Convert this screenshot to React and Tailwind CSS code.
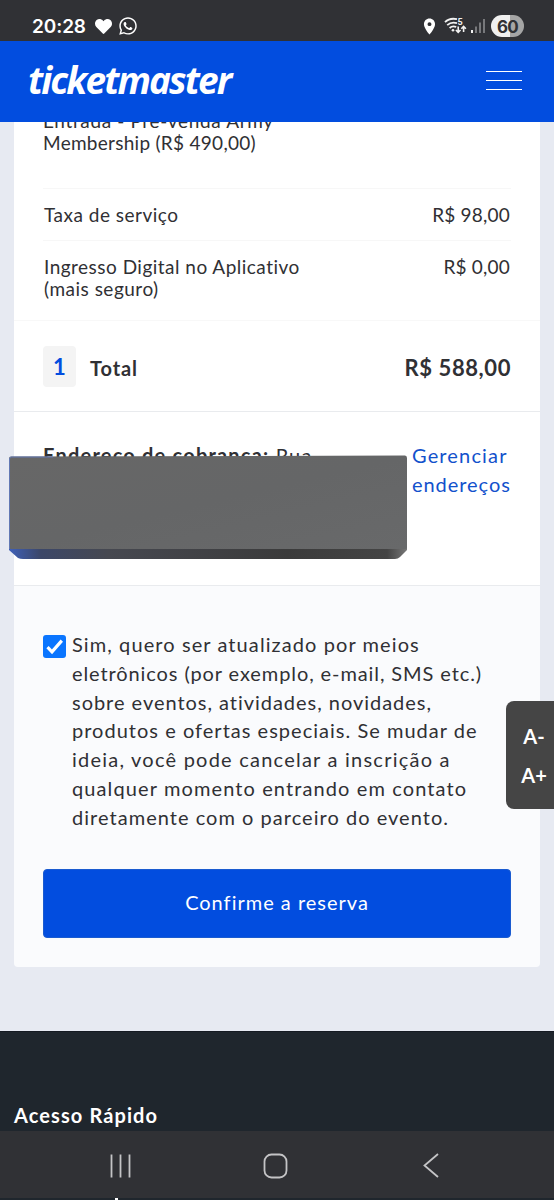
import React, { useState } from "react";
import { FaHeart, FaWhatsapp } from "react-icons/fa";
import { MdLocationOn } from "react-icons/md";

const fees = [
  { label: ["Taxa de serviço"], tracking: ["tracking-[0.5px]"], price: "R$ 98,00" },
  {
    label: ["Ingresso Digital no Aplicativo", "(mais seguro)"],
    tracking: ["tracking-[0.48px]", "tracking-[0.5px]"],
    price: "R$ 0,00",
  },
];

const consentLines = [
  { text: "Sim, quero ser atualizado por meios", tracking: "tracking-[1.09px]" },
  { text: "eletrônicos (por exemplo, e-mail, SMS etc.)", tracking: "tracking-[0.9px]" },
  { text: "sobre eventos, atividades, novidades,", tracking: "tracking-[0.97px]" },
  { text: "produtos e ofertas especiais. Se mudar de", tracking: "tracking-[1.02px]" },
  { text: "ideia, você pode cancelar a inscrição a", tracking: "tracking-[1.23px]" },
  { text: "qualquer momento entrando em contato", tracking: "tracking-[1.11px]" },
  { text: "diretamente com o parceiro do evento.", tracking: "tracking-[1.03px]" },
];

const WifiIcon = () => (
  <svg width="23" height="18" viewBox="0 0 23 18" fill="none" stroke="#f2f2f2" strokeWidth="1.8">
    <path d="M1 5.2C4 2.2 8 1 13 2.2" />
    <path d="M3.2 8.2C6 5.6 9.5 5 13 6.2" />
    <path d="M5.6 11C7.6 9.2 10 9 12.2 10" />
    <circle cx="9" cy="13.3" r="1.3" fill="#f2f2f2" stroke="none" />
    <path d="M14.2 9.5v5.5M11.9 13l2.3 2.3 2.3-2.3M19.6 15V9.8M17.3 11.8l2.3-2.3 2.3 2.3" strokeWidth="1.6" />
    <text x="13.6" y="8" fontSize="9" fontWeight="700" fontFamily="Roboto, sans-serif" fill="#f2f2f2" stroke="none">5</text>
  </svg>
);

const SignalIcon = () => (
  <svg width="15" height="16" viewBox="0 0 15 16">
    <rect x="0" y="12" width="2" height="3" fill="#f2f2f2" />
    <rect x="4" y="8.5" width="2" height="6.5" fill="#77787b" />
    <rect x="8" y="4.5" width="2" height="10.5" fill="#77787b" />
    <rect x="12" y="1" width="2" height="14" fill="#77787b" />
  </svg>
);

const StatusBar = () => (
  <div className="flex h-[41px] shrink-0 items-center bg-[#303135] pt-[11px] pr-[30px] pb-0 pl-8 text-white">
    <span className="font-[Inter,sans-serif] text-[19px] leading-none font-semibold tracking-[-0.1px]">20:28</span>
    <FaHeart className="ml-[9px]" size={17} />
    <FaWhatsapp className="ml-[6px]" size={20} />
    <div className="ml-auto flex items-center">
      <MdLocationOn size={19} />
      <span className="ml-[5px]"><WifiIcon /></span>
      <span className="ml-[4px]"><SignalIcon /></span>
      <span className="ml-[5px] flex h-[22px] w-[33px] items-center justify-center rounded-full bg-linear-to-r from-[#f0f0f0] from-58% to-[#a5a5a5] to-58% pt-[2px] font-[Inter,sans-serif] text-[17px] leading-none font-bold tracking-[-0.8px] text-[#303135]">
        60
      </span>
    </div>
  </div>
);

const Header = () => (
  <header className="flex h-[81px] shrink-0 items-center justify-between bg-[#024ddf] pr-8 pl-7">
    <span className="pb-[5px] font-['Open_Sans',sans-serif] text-[37px] leading-none font-bold tracking-[-1.9px] text-white italic">
      ticketmaster
    </span>
    <button type="button" aria-label="Menu" className="mb-[3px] flex w-9 flex-col gap-2">
      <span className="h-px bg-white" />
      <span className="h-px bg-white" />
      <span className="h-px bg-white" />
    </button>
  </header>
);

const Summary = () => (
  <section className="bg-white">
    <div className="px-[29px] text-[19px] leading-[22px]">
      <div className="h-[79px] border-b border-[#f7f7f7]">
        <p className="tracking-[0.64px]">Entrada - Pré-venda Army</p>
        <p className="tracking-[0.28px]">Membership (R$ 490,00)</p>
      </div>
      {fees.map((fee, i) => (
        <div
          key={fee.price}
          className={i === 0 ? "flex h-[52px] justify-between border-b border-[#f7f7f7] pt-[15px]" : "flex h-[79px] justify-between pt-[15px]"}
        >
          <div className="pl-px">
            {fee.label.map((line, n) => (
              <p key={line} className={fee.tracking[n]}>{line}</p>
            ))}
          </div>
          <span className="pr-px tracking-[0.2px]">{fee.price}</span>
        </div>
      ))}
    </div>
    <div className="flex h-[92px] items-center border-y border-t-[#f8f8f8] border-b-[#e9ebee] px-[29px] font-bold">
      <span className="flex h-[41px] w-[33px] items-center justify-center rounded bg-[#f4f4f4] text-[22px] text-[#024ddf]">1</span>
      <span className="ml-[14px] pt-[3px] text-[20px] tracking-[0.9px]">Total</span>
      <span className="ml-auto pt-[2px] text-[22px] tracking-[0.58px]">R$ 588,00</span>
    </div>
  </section>
);

const Address = () => (
  <section className="relative flex h-[174px] justify-between border-b border-[#e9ebee] bg-white px-[29px] pt-[29px] text-[20px] leading-[29px]">
    <p className="tracking-[1.2px]">
      <strong>Endereço de cobrança:</strong> Rua
    </p>
    <p className="w-[99px] text-[#1251cc]">
      <span className="block tracking-[1.15px]">Gerenciar</span>
      <span className="block tracking-[0.95px]">endereços</span>
    </p>
    {/* solid block that covers the address */}
    <svg className="absolute top-[43px] -left-[5px]" width="398" height="106" viewBox="0 0 398 106">
      <defs>
        <linearGradient id="edge" x1="0" x2="1" y1="0" y2="0">
          <stop offset="0" stopColor="#3e5fb8" />
          <stop offset="0.08" stopColor="#3c4768" />
          <stop offset="0.25" stopColor="#464850" />
          <stop offset="0.7" stopColor="#3b3b3b" />
          <stop offset="0.95" stopColor="#444444" />
          <stop offset="1" stopColor="#777777" />
        </linearGradient>
        <linearGradient id="face" x1="0" x2="1" y1="0" y2="1">
          <stop offset="0" stopColor="#676767" />
          <stop offset="0.5" stopColor="#656667" />
          <stop offset="1" stopColor="#68696a" />
        </linearGradient>
      </defs>
      <path d="M0 92H398V95L391 102Q389 104 386 104H14Q11 104 9 103L0 95Z" fill="url(#edge)" />
      <path d="M2 1.5L396 0.5Q398 0.5 398 3V93Q398 94 396 94H2Q0 94 0 92V3.5Q0 1.5 2 1.5Z" fill="url(#face)" />
      <path d="M0.5 94V4Q0.5 2 2.5 2H44" fill="none" stroke="#6279b4" />
    </svg>
  </section>
);

const Consent = () => {
  const [checked, setChecked] = useState(true);

  return (
    <section className="h-[381px] rounded-b bg-[#fafbfd] px-[29px] pt-11">
      <label className="flex text-[20px] leading-[28.75px]">
        <input type="checkbox" className="sr-only" checked={checked} onChange={(e) => setChecked(e.target.checked)} />
        <span className="mt-[5px] mr-[6px] flex size-[23px] shrink-0 items-center justify-center rounded-[3px] bg-[#0a75ff]">
          {checked && (
            <svg width="23" height="23" viewBox="0 0 23 23" fill="none" stroke="#fff" strokeWidth="3.2">
              <path d="M4.5 12.2L9 16.8L18.8 5.6" />
            </svg>
          )}
        </span>
        <span className="whitespace-nowrap">
          {consentLines.map((line) => (
            <span key={line.text} className={`block ${line.tracking}`}>{line.text}</span>
          ))}
        </span>
      </label>
      <button
        type="button"
        className="mt-[38px] h-[69px] w-full rounded border border-[#1a5bd0] bg-[#024ddf] pb-[3px] text-[20px] tracking-[1px] text-white"
      >
        Confirme a reserva
      </button>
    </section>
  );
};

const FontSizeControl = () => (
  <div className="absolute top-[701px] right-0 flex h-[108px] w-12 flex-col items-center justify-center gap-[10px] rounded-l-lg bg-[#454545] pt-px pl-2 text-[20px] leading-[29px] font-bold text-white">
    <button type="button">A-</button>
    <button type="button">A+</button>
  </div>
);

const NavBar = () => (
  <nav className="flex h-[67px] shrink-0 items-center bg-[#303135] pt-[2px] pl-[110px]">
    <svg width="22" height="24" viewBox="0 0 22 24" stroke="#c4c4c6" strokeWidth="1.8">
      <path d="M1.5 0.5V23.5M10.5 0.5V23.5M19.5 0.5V23.5" />
    </svg>
    <svg className="ml-[131px]" width="25" height="26" viewBox="0 0 25 26" fill="none" stroke="#c4c4c6" strokeWidth="1.8">
      <rect x="1.5" y="1.5" width="22" height="23" rx="7" />
    </svg>
    <svg className="ml-[135px]" width="16" height="25" viewBox="0 0 16 25" fill="none" stroke="#c4c4c6" strokeWidth="1.8">
      <path d="M15 1L1.5 12.5L15 24" />
    </svg>
  </nav>
);

const App = () => (
  <div className="relative flex h-[1200px] w-[554px] flex-col overflow-hidden bg-[#e7eaf2] font-[Lato,sans-serif] text-[#303034]">
    <StatusBar />
    <Header />
    <main className="h-[1009px] shrink-0 overflow-hidden">
      <div className="-mt-3 px-[14px] pb-16">
        <Summary />
        <Address />
        <Consent />
      </div>
      <footer className="h-[120px] border-t border-[#151a22] bg-[#1f262d] px-[14px] pt-[68px] text-[20px] leading-[30px] font-bold tracking-[1.1px] text-white">
        Acesso Rápido
      </footer>
    </main>
    <NavBar />
    <div className="h-[2px] shrink-0 bg-[#1f262d] pl-[115px]">
      <div className="h-[2px] w-[3px] bg-white" />
    </div>
    <FontSizeControl />
  </div>
);

export default App;
